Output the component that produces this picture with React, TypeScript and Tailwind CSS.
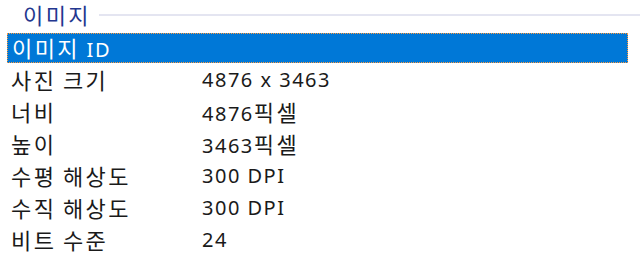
const rows = [
  { label: "사진 크기", value: "4876 x 3463" },
  { label: "너비", value: "4876픽셀" },
  { label: "높이", value: "3463픽셀" },
  { label: "수평 해상도", value: "300 DPI" },
  { label: "수직 해상도", value: "300 DPI" },
  { label: "비트 수준", value: "24" },
];

// Hangul is drawn a little larger than Latin in the original dialog
function Txt({ s }: { s: string }) {
  return (
    <span>
      {s.split(/([가-힣]+)/).map((part, i) =>
        /[가-힣]/.test(part) ? (
          <span key={i} className="text-[22px] tracking-[2.4px]">
            {part}
          </span>
        ) : (
          <span key={i}>{part}</span>
        )
      )}
    </span>
  );
}

export default function App() {
  return (
    <div
      className="w-[640px] h-[260px] bg-white text-[#1a1a1a] text-[20px] tracking-[1.5px] overflow-hidden"
      style={{ fontFamily: '"Noto Sans", "Noto Sans CJK KR", sans-serif' }}
    >
      <div className="flex items-center h-[32px] pl-[23px]">
        <span className="text-[#23378f] leading-none -mt-[2px]">
          <Txt s="이미지" />
        </span>
        <div className="flex-1 h-[2px] bg-[#e4e5f1] ml-[8px] -mt-[2px]" />
      </div>
      <div className="h-[32px] pl-[7px] pr-[12px] py-[1px]">
        <div className="h-full flex items-center bg-[#0078d7] border border-dotted border-[#ff9a3c] text-white pl-[4px] leading-none">
          <Txt s="이미지 ID" />
        </div>
      </div>
      {rows.map((row) => (
        <div key={row.label} className="h-[32px] flex items-center pl-[11px] leading-none">
          <div className="w-[191px]">
            <Txt s={row.label} />
          </div>
          <div>
            <Txt s={row.value} />
          </div>
        </div>
      ))}
    </div>
  );
}
